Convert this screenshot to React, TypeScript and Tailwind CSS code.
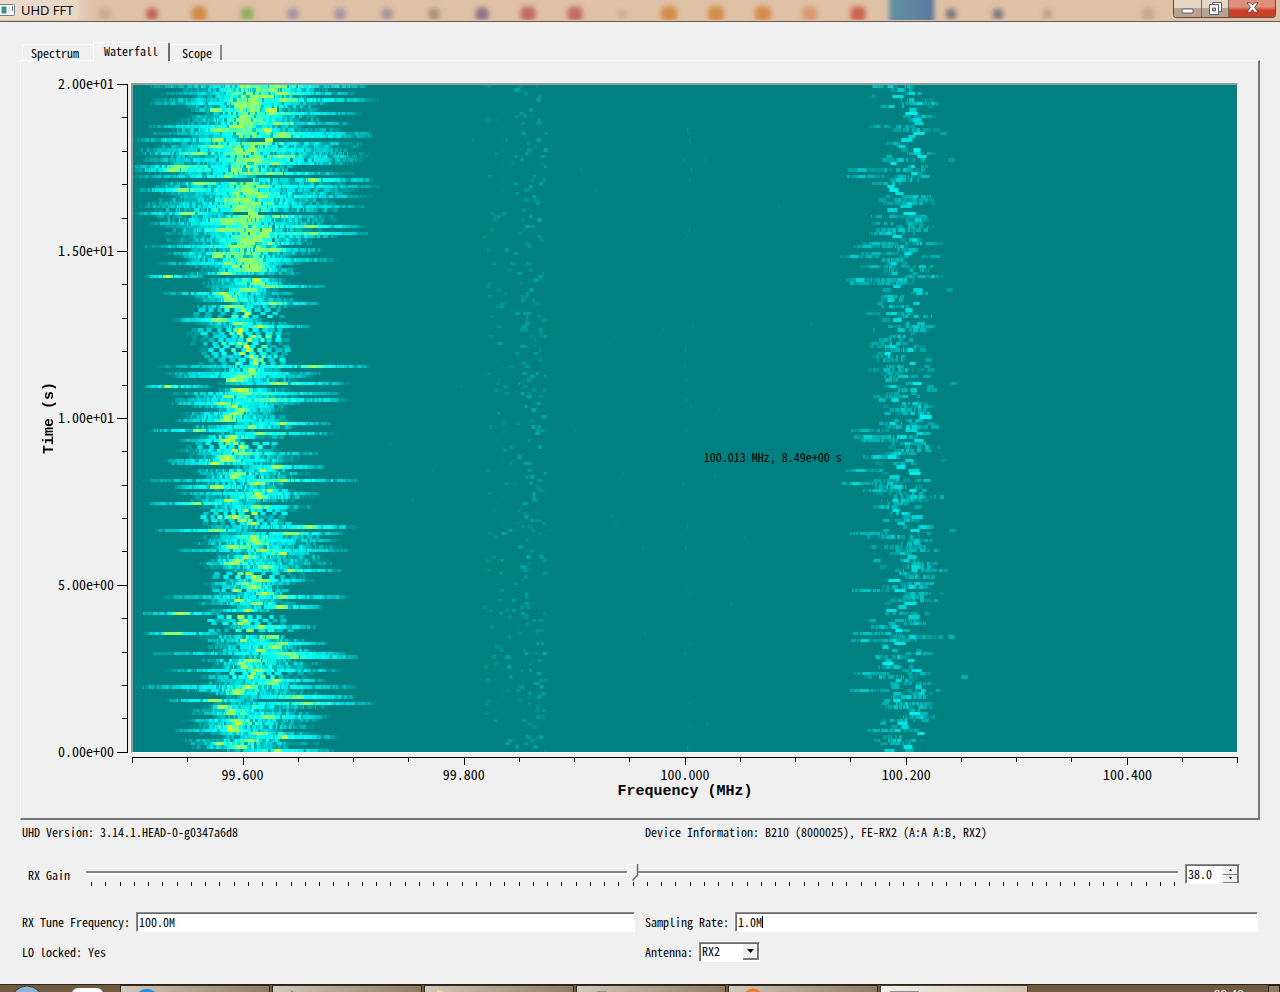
import { useMemo, useState } from 'react';
import type { ReactNode } from 'react';

const PLOT_W = 1106;
const PLOT_H = 667;
const ROWS = 200;

/** [row, left, right, left core, right core]: usual extent of the strong carrier */
const ENVELOPE: number[][] = [
  [0, 40, 185, 75, 140],
  [8, 52, 190, 75, 150],
  [14, 24, 215, 60, 150],
  [20, 12, 222, 60, 150],
  [30, 20, 212, 60, 160],
  [36, 14, 212, 65, 155],
  [44, 34, 200, 80, 150],
  [50, 40, 175, 80, 140],
  [54, 60, 160, 85, 130],
  [60, 65, 150, 88, 125],
  [66, 66, 152, 95, 125],
  [70, 52, 155, 85, 125],
  [76, 58, 155, 100, 125],
  [83, 66, 155, 98, 122],
  [88, 84, 170, 98, 150],
  [96, 58, 150, 82, 130],
  [104, 56, 150, 84, 130],
  [110, 54, 150, 80, 130],
  [118, 60, 165, 90, 140],
  [126, 70, 165, 95, 140],
  [130, 70, 150, 95, 125],
  [136, 66, 195, 100, 160],
  [142, 78, 190, 98, 150],
  [150, 72, 160, 95, 140],
  [158, 80, 150, 95, 130],
  [165, 66, 165, 90, 140],
  [172, 80, 180, 98, 150],
  [180, 62, 180, 90, 140],
  [190, 56, 175, 88, 135],
  [199, 50, 170, 80, 140],
];

/** [row, left, right, peak]: long modulation sweeps */
const STREAKS: number[][] = [
  [0, 15, 235, 145], [2, 30, 222, 150], [4, 18, 245, 150], [5, 16, 195, 105],
  [8, 70, 228, 140], [12, 14, 170, 100], [14, 18, 238, 150], [15, 50, 242, 150],
  [16, 0, 115, 85], [19, 5, 218, 120], [22, 10, 230, 120], [24, 0, 160, 45],
  [25, 0, 155, 40], [27, 0, 125, 95], [28, 120, 240, 180], [30, 20, 245, 130],
  [31, 3, 225, 50], [33, 35, 238, 130], [36, 5, 232, 108], [38, 0, 100, 54],
  [41, 15, 190, 95], [42, 25, 231, 178], [44, 30, 235, 180], [48, 10, 150, 105],
  [52, 50, 202, 110], [53, 24, 170, 95], [57, 11, 70, 35], [60, 70, 192, 135],
  [62, 29, 160, 90], [65, 90, 188, 140], [70, 38, 130, 86], [72, 70, 178, 128],
  [84, 22, 236, 181], [86, 30, 188, 120], [87, 38, 180, 110], [89, 84, 215, 145],
  [90, 10, 80, 35], [92, 36, 208, 115], [94, 40, 216, 140], [95, 35, 165, 90],
  [100, 40, 160, 95], [101, 90, 197, 150], [103, 15, 120, 65], [104, 80, 202, 128],
  [106, 45, 110, 94], [110, 55, 184, 110], [112, 30, 165, 95], [113, 35, 150, 82],
  [114, 100, 191, 143], [118, 9, 226, 150], [120, 40, 150, 84], [122, 45, 187, 125],
  [125, 14, 130, 64], [132, 68, 222, 177], [133, 21, 121, 84], [134, 84, 212, 158],
  [136, 70, 205, 122], [139, 43, 215, 130], [145, 90, 207, 158], [148, 90, 182, 128],
  [153, 29, 215, 150], [156, 95, 190, 148], [158, 6, 88, 48], [162, 90, 183, 128],
  [164, 10, 88, 40], [167, 80, 195, 150], [170, 18, 212, 155], [171, 95, 225, 161],
  [175, 30, 210, 125], [178, 75, 192, 143], [180, 3, 223, 115], [183, 90, 223, 165],
  [184, 33, 125, 82], [185, 75, 240, 174], [189, 80, 197, 135], [193, 41, 150, 100],
  [195, 85, 203, 152], [199, 90, 200, 145],
];

const SPARSE: number[][] = [[67, 69], [73, 83], [107, 108], [127, 131], [146, 147], [151, 151], [159, 161], [163, 163], [176, 177]];

function seeded(seed: number) {
  let s = seed;
  return () => {
    s = (s + 0x6d2b79f5) | 0;
    let t = Math.imul(s ^ (s >>> 15), 1 | s);
    t = (t + Math.imul(t ^ (t >>> 7), 61 | t)) ^ t;
    return ((t ^ (t >>> 14)) >>> 0) / 4294967296;
  };
}

const LEVELS = 24;

function levelColor(level: number) {
  const v = level / LEVELS;
  const mix = (a: number[], b: number[], k: number) =>
    `rgb(${a.map((n, i) => Math.round(n + (b[i] - n) * k)).join(',')})`;
  if (v < 0.55) return mix([0, 128, 128], [0, 240, 240], v / 0.55);
  if (v < 0.65) return mix([0, 240, 240], [10, 255, 245], (v - 0.55) / 0.1);
  if (v < 0.85) return mix([10, 255, 245], [128, 255, 128], (v - 0.65) / 0.2);
  return mix([128, 255, 128], [240, 255, 15], (v - 0.85) / 0.15);
}

function envelopeAt(row: number) {
  for (let i = 1; i < ENVELOPE.length; i++) {
    const a = ENVELOPE[i - 1];
    const b = ENVELOPE[i];
    if (row <= b[0]) {
      const k = (row - a[0]) / (b[0] - a[0]);
      return a.slice(1).map((n, j) => n + (b[j + 1] - n) * k);
    }
  }
  return ENVELOPE[ENVELOPE.length - 1].slice(1);
}

function buildWaterfall() {
  const rnd = seeded(20191);
  const paths: string[] = Array.from({ length: LEVELS + 1 }, () => '');
  for (let r = 0; r < ROWS; r++) {
    const cells = new Float32Array(PLOT_W);
    const put = (x: number, w: number, v: number) => {
      for (let i = Math.max(0, Math.round(x)); i < Math.min(PLOT_W, Math.round(x + w)); i++) {
        cells[i] = Math.max(cells[i], v);
      }
    };
    const blob = (x: number, w: number, v: number) => {
      put(x - w / 2 - 1, w + 2, v * 0.6);
      put(x - w / 2, w, v);
    };
    const streak = STREAKS.find((s) => s[0] === r);
    const sparse = SPARSE.some((s) => r >= s[0] && r <= s[1]);
    const [eL, eR, cL, cR] = envelopeAt(r);
    const dense = r < 56;

    if (sparse) {
      const step = 7 + rnd() * 4;
      const centre = 112 + (rnd() - 0.5) * 22;
      for (let x = eL + rnd() * 14; x < eR; x += step * (0.8 + rnd() * 0.6)) {
        const d = Math.abs(x - centre) / 50;
        blob(x, 3 + Math.round(rnd() * 3), Math.min(0.8, Math.max(0.12, 0.78 - d * 0.6 + (rnd() - 0.5) * 0.4)));
      }
      blob(centre, 5, 0.92 + rnd() * 0.06);
    } else {
      let left = eL + (rnd() - 0.5) * 26;
      let right = eR + (rnd() - 0.5) * 30;
      let peak = cL + rnd() * (cR - cL);
      let strength = dense ? 0.74 : 0.72;
      if (streak) {
        left = streak[1];
        right = streak[2];
        peak = streak[3];
        strength = 0.74;
      }
      const ragged = streak ? 0.18 : 0.38;
      let x = Math.max(0, left);
      while (x < right) {
        const w = 1 + Math.floor(rnd() * 3);
        const side = x < peak ? (x - left) / (peak - left + 1) : (right - x) / (right - peak + 1);
        const amp = Math.pow(Math.max(0, side), streak ? 0.5 : 0.72);
        let v = strength * amp + (rnd() - 0.5) * ragged;
        if (dense && (!streak || (x > 80 && streak[2] > 140))) {
          const core = Math.exp(-Math.pow((x - 113) / 36, 2));
          v = Math.max(v, 0.86 * core + (rnd() - 0.6) * 0.26);
        }
        if (rnd() < (1 - amp) * 0.45) v *= 0.4;
        if (rnd() < 0.07) v *= 0.5;
        put(x, w, Math.max(0.05, Math.min(0.86, v)));
        x += w;
      }
      const pw = 6 + rnd() * 12;
      put(peak - pw / 2, pw, 0.8 + rnd() * 0.07);
      put(peak - 3, 5, 0.86 + rnd() * (dense ? 0.04 : 0.1));
      if (dense && rnd() < 0.4) put(98 + rnd() * 35, 4 + rnd() * 8, 0.87 + rnd() * 0.03);
    }

    // Weak station near 99.855 MHz
    for (let k = 0; k < 3; k++) {
      if (rnd() < 0.45) {
        const c = rnd() < 0.55 ? 402 + (rnd() - 0.5) * 24 : 388 + (rnd() - 0.5) * 44;
        blob(c, 1 + Math.round(rnd() * 3), 0.07 + rnd() * 0.12);
      }
    }
    if (rnd() < 0.3) put(370, 1, 0.06);
    if (rnd() < 0.14) put(350 + rnd() * 14, 4, 0.1);
    if (rnd() < 0.16) put(556 + (rnd() - 0.5) * 10, 1, 0.07);
    if (rnd() < 0.16) put(250 + rnd() * 440, 2, 0.05);

    // Second station at 100.2 MHz
    const focus = 773 + Math.sin(r / 7) * 4 + (rnd() - 0.5) * 34;
    const mode = rnd();
    if (mode < 0.3) {
      blob(focus, 5 + rnd() * 6, 0.4 + rnd() * 0.14);
    } else {
      const span = 16 + rnd() * 40;
      for (let x = focus - span / 2; x < focus + span / 2; ) {
        const w = 1 + Math.floor(rnd() * 4);
        const edge = 1 - Math.abs(x - focus) / span;
        if (rnd() < 0.72) put(x, w, (0.08 + rnd() * 0.32) * edge + 0.05);
        x += w + (rnd() < 0.4 ? 1 : 0);
      }
      if (rnd() < 0.4) blob(focus + (rnd() - 0.5) * 12, 5, 0.36 + rnd() * 0.12);
    }
    if (rnd() < 0.5) blob(770 + (rnd() - 0.5) * 60, 3 + rnd() * 4, 0.1 + rnd() * 0.22);
    const wide = (r < 36 && rnd() < 0.2) || (r > 44 && r < 62 && rnd() < 0.35) || (r > 100 && r < 185 && rnd() < 0.18);
    if (wide) {
      const start = 708 + rnd() * 26;
      for (let x = start; x < start + 36; x += 3 + Math.floor(rnd() * 2)) put(x, 2 + rnd() * 2, 0.1 + rnd() * 0.2);
      blob(start + 14, 8, 0.24 + rnd() * 0.18);
    }
    if (rnd() < 0.05) blob(808 + rnd() * 30, 5, 0.12 + rnd() * 0.14);

    const y0 = Math.round((r * PLOT_H) / ROWS);
    const h = Math.round(((r + 1) * PLOT_H) / ROWS) - y0;
    let i = 0;
    while (i < PLOT_W) {
      const level = Math.round(Math.min(1, cells[i]) * LEVELS);
      let j = i + 1;
      while (j < PLOT_W && Math.round(Math.min(1, cells[j]) * LEVELS) === level) j++;
      if (level > 0) paths[level] += `M${i} ${y0}h${j - i}v${h}h${i - j}z`;
      i = j;
    }
  }
  return paths;
}

function Waterfall() {
  const paths = useMemo(buildWaterfall, []);
  return (
    <svg
      viewBox={`0 0 ${PLOT_W} ${PLOT_H}`}
      preserveAspectRatio="none"
      shapeRendering="crispEdges"
      className="block size-full"
      role="img"
      aria-label="Waterfall"
    >
      {paths.map((d, i) => (d ? <path key={i} d={d} fill={levelColor(i)} /> : null))}
    </svg>
  );
}

/** [centre x, colour, width] of the glass reflections behind the title bar */
const REFLECTIONS: [number, string, number][] = [
  [105, '#c9ab94', 12], [152, '#bd5c52', 11], [199, '#d48a45', 15], [247, '#94ae60', 13],
  [293, '#a393a0', 11], [340, '#a393a0', 11], [387, '#a393a0', 11], [434, '#a89078', 11],
  [482, '#8f7285', 13], [528, '#c26a68', 15], [575, '#c26a68', 15], [622, '#c9ab92', 8],
  [669, '#d48e4c', 16], [716, '#d48e4c', 16], [763, '#d48e4c', 16], [810, '#d99a72', 15],
  [858, '#cc6450', 15], [951, '#77757c', 10], [998, '#77757c', 10], [1047, '#bd9f8c', 9],
  [1148, '#c8aa92', 13],
];

function TitleBar() {
  return (
    <header className="relative flex h-[22px] shrink-0 items-start justify-between overflow-hidden border-b border-[#6b5a52] bg-[#dfc1a6]">
      <svg className="absolute inset-0 h-5 w-full" aria-hidden="true">
        <defs>
          <filter id="soft" x="-50%" y="-50%" width="200%" height="200%">
            <feGaussianBlur stdDeviation="2.4" />
          </filter>
          <linearGradient id="tile" x1="0" x2="1">
            <stop offset="0" stopColor="#6293a0" />
            <stop offset="1" stopColor="#5a78a0" />
          </linearGradient>
          <linearGradient id="glow" x1="0" x2="1">
            <stop offset="0" stopColor="#ecdccc" />
            <stop offset="0.75" stopColor="#ead8c6" />
            <stop offset="1" stopColor="#dfc1a6" stopOpacity="0" />
          </linearGradient>
        </defs>
        <rect width="100" height="20" fill="url(#glow)" />
        <rect x="889" y="-8" width="45" height="36" fill="url(#tile)" filter="url(#soft)" />
        {REFLECTIONS.map(([x, color, w]) => (
          <rect key={x} x={x - w / 2} y={14 - w / 2} width={w} height={w} rx={w / 3} fill={color} filter="url(#soft)" />
        ))}
      </svg>
      <div className="relative flex h-5 items-center gap-1.5">
        <svg width="15" height="12" viewBox="0 0 15 12" aria-hidden="true">
          <rect x="-1" y="0.5" width="15.5" height="11" rx="1" fill="#fff" stroke="#6b7f92" />
          <rect x="1.5" y="2.5" width="5" height="7" fill="#3f8f80" />
          <rect x="8" y="2.5" width="2" height="7" fill="#dde4ea" />
          <rect x="12" y="2" width="1" height="5" fill="#5c6c88" />
        </svg>
        <h1 className="font-['Open_Sans','Noto_Sans',sans-serif] text-[13px] leading-5 text-black">UHD FFT</h1>
      </div>
      <div className="relative mr-1 flex h-[18px] overflow-hidden rounded-b-[4px] border border-t-0 border-[#5d4c44]">
        <button aria-label="Minimize" className="flex w-7 items-center justify-center border-r border-[#7a685e] bg-linear-to-b from-[#e6d6c8] from-50% to-[#b9a18f] to-50%">
          <svg width="13" height="6" viewBox="0 0 13 6" className="mt-1">
            <rect x="1" y="1" width="11" height="4" rx="1" fill="#fff" stroke="#5a5f70" />
          </svg>
        </button>
        <button aria-label="Restore" className="flex w-[27px] items-center justify-center border-r border-[#7a685e] bg-linear-to-b from-[#e6d6c8] from-50% to-[#b9a18f] to-50% pb-px">
          <svg width="13" height="13" viewBox="0 0 13 13">
            <path d="M3.5 0.5h9v9h-9z" fill="#fff" stroke="#5a5f70" />
            <path d="M0.5 2.5h9v10h-9z" fill="#fff" stroke="#5a5f70" />
            <path d="M3.5 6h3v3h-3z" fill="#c8b4a4" stroke="#5a5f70" />
          </svg>
        </button>
        <button aria-label="Close" className="flex w-[46px] items-center justify-center bg-linear-to-b from-[#dd907c] from-40% to-[#c8402a] to-60% pb-0.5">
          <svg width="13" height="11" viewBox="0 0 13 11">
            <path d="M1 .8h3.500l2 2.200 2-2.200H12L8.600 5.400 12.200 10.200H8.500l-2-2.400-2 2.400H.8L4.400 5.400z" fill="#fff" stroke="#5f3a3c" strokeWidth="0.9" />
          </svg>
        </button>
      </div>
    </header>
  );
}

const TAB_PADDING: Record<string, string> = {
  Spectrum: 'pl-2 pr-3.5',
  Waterfall: 'pl-2.5 pr-2.5',
  Scope: 'pl-3 pr-2',
};

function Tab({ name, selected, onSelect }: { name: string; selected: boolean; onSelect: () => void }) {
  return (
    <button
      role="tab"
      aria-selected={selected}
      onClick={onSelect}
      className={`relative rounded-t-[2px] border-t border-white text-center leading-4 ${TAB_PADDING[name]} ${
        selected
          ? 'z-10 -mb-px h-[19px] border-r-2 border-l border-r-[#6e6e6e] bg-[#f0f0f0] pb-0.5'
          : 'h-4 border-l last:border-r-2 last:border-l-0 last:border-r-[#8a8a8a]'
      }`}
    >
      {name}
    </button>
  );
}

const TIME_LABELS = ['2.00e+01', '1.50e+01', '1.00e+01', '5.00e+00', '0.00e+00'];
const FREQ_LABELS = ['99.600', '99.800', '100.000', '100.200', '100.400'];

function Field({ id, label, children }: { id: string; label: string; children: ReactNode }) {
  return (
    <div className="flex min-w-0 flex-1 items-center gap-1.5">
      <label htmlFor={id} className="shrink-0 whitespace-pre">{label}</label>
      {children}
    </div>
  );
}

const SUNKEN = 'border border-t-[#8a8a8a] border-l-[#8a8a8a] border-r-white border-b-white shadow-[inset_1px_1px_0_#696969]';
const AXIS_TITLE = "font-['Liberation_Mono',monospace] text-[15px] leading-4 font-bold whitespace-nowrap";

function Plot() {
  return (
    <div className="grid flex-1 grid-cols-[37px_auto_minmax(0,1fr)] grid-rows-[minmax(0,1fr)_auto] pt-[22px] pr-5">
      <div className="flex items-center justify-end">
        <span className={`rotate-180 [writing-mode:vertical-rl] ${AXIS_TITLE}`}>Time (s)</span>
      </div>
      <div className="flex pt-px pr-[3px]">
        <div className="flex w-14 flex-col justify-between text-[14px]">
          {TIME_LABELS.map((t) => (
            <div key={t} className="flex h-px items-center justify-end leading-none">
              <span className="pb-[3px]">{t}</span>
            </div>
          ))}
        </div>
        <div className="ml-1 flex w-[10px] flex-col items-end justify-between border-r border-black">
          {Array.from({ length: 21 }, (_, i) => (
            <div key={i} className={i % 5 === 0 ? 'h-px w-2.5 bg-black' : 'h-px w-[5px] bg-black'} />
          ))}
        </div>
      </div>
      <div className="relative border-t-2 border-r border-b border-l-2 border-t-[#8f9f9c] border-r-white border-b-white border-l-[#8f9f9c] bg-[#008080]">
        <div className="absolute inset-0">
          <Waterfall />
        </div>
        <div className="absolute top-[56%] left-[51.7%] -translate-y-1/2 pb-1 text-black">100.013 MHz, 8.49e+00 s</div>
      </div>
      <div className="col-start-3 pt-1 pl-px">
        <div className="flex h-[7px] items-start justify-between border-t border-black">
          {Array.from({ length: 21 }, (_, i) => (
            <div key={i} className={i % 4 === 2 ? 'h-[7px] w-px bg-black' : i === 0 || i === 20 ? 'h-[5px] w-px bg-black' : 'h-1 w-px bg-black'} />
          ))}
        </div>
        <div className="grid grid-cols-5 text-center text-[14px] leading-5">
          {FREQ_LABELS.map((f) => (
            <span key={f}>{f}</span>
          ))}
        </div>
        <div className={`mb-[18px] text-center ${AXIS_TITLE}`}>Frequency (MHz)</div>
      </div>
    </div>
  );
}

const TASKS: [number, ReactNode][] = [
  [0, <circle key="a" cx="26" cy="16" r="13" fill="#1f8fe0" />],
  [1, <path key="b" d="M17 4l8 4v6z" fill="#2f7fc0" />],
  [2, <path key="c" d="M12 4l8 2h14v8H12z" fill="#f0e08c" />],
  [3, <path key="d" d="M20 5h10v6H22z" fill="#8d9a94" />],
  [4, <circle key="e" cx="24" cy="12" r="8" fill="none" stroke="#ee7a22" strokeWidth="3" />],
];

function TaskBar() {
  return (
    <footer className="flex h-2 shrink-0 items-start justify-between overflow-hidden border-t border-[#2e2415] bg-[#6f5a42]">
      <div className="flex h-8 items-start">
        <svg width="120" height="32" viewBox="0 0 120 32" aria-hidden="true">
          <circle cx="27" cy="17" r="16" fill="#8fb2cc" stroke="#2b3c4a" />
          <rect x="72" y="3" width="31" height="20" rx="6" fill="#fff" />
        </svg>
        {TASKS.map(([id, art]) => (
          <div key={id} className="mr-0.5 h-8 w-[150px] border border-[#33291c] bg-linear-to-r from-[#d2c9bd] to-[#8c7b66]">
            <svg width="100" height="32" aria-hidden="true">{art}</svg>
          </div>
        ))}
        <div className="h-8 w-[148px] border border-[#4c3e2c] bg-linear-to-r from-[#f3efe9] to-[#cfc4b5]">
          <svg width="60" height="32" aria-hidden="true">
            <rect x="9" y="5" width="29" height="20" fill="#8b8f92" />
          </svg>
        </div>
      </div>
      <div className="flex h-8 items-start">
        <time className="mt-0.5 mr-6 font-['Open_Sans',sans-serif] text-xs leading-4 text-white">09:40</time>
        <div className="h-8 w-3 border border-[#2e2415] bg-[#8e7f6b]" />
      </div>
    </footer>
  );
}

export default function App() {
  const [tab, setTab] = useState('Waterfall');
  const [gain, setGain] = useState(38);
  const [freq, setFreq] = useState('100.0M');
  const [rate, setRate] = useState('1.0M');
  const [antenna, setAntenna] = useState('RX2');
  const nudge = (d: number) => setGain((g) => Math.min(76, Math.max(0, g + d)));

  return (
    <div className="flex min-h-screen flex-col bg-[#f0f0f0] font-['Noto_Sans_CJK_SC','Liberation_Mono',monospace] text-xs leading-4 text-black [font-feature-settings:'hwid']">
      <TitleBar />
      <main className="flex flex-1 flex-col px-5 pt-5">
        <div role="tablist" className="flex items-end pl-0.5">
          {['Spectrum', 'Waterfall', 'Scope'].map((n) => (
            <Tab key={n} name={n} selected={tab === n} onSelect={() => setTab(n)} />
          ))}
        </div>
        <section className="flex flex-1 flex-col border-t border-r-2 border-b-2 border-l border-t-white border-r-[#777777] border-b-[#777777] border-l-white">
          <Plot />
        </section>

        <div className="flex gap-2.5 px-0.5 pt-1">
          <p className="flex-1">UHD Version: 3.14.1.HEAD-0-g0347a6d8</p>
          <p className="flex-1">Device Information: B210 (8000025), FE-RX2 (A:A A:B, RX2)</p>
        </div>

        <div className="mt-6 flex items-start pr-5 pl-2">
          <label htmlFor="gain" className="mt-[3px] w-[58px]">RX Gain</label>
          <div className="flex-1">
            <div className="relative flex h-[18px] items-center">
              <input
                id="gain"
                type="range"
                min={0}
                max={76}
                value={gain}
                onChange={(e) => setGain(Number(e.target.value))}
                className="h-4 w-full appearance-none bg-transparent [&::-webkit-slider-runnable-track]:h-1 [&::-webkit-slider-runnable-track]:border-t-2 [&::-webkit-slider-runnable-track]:border-b-2 [&::-webkit-slider-runnable-track]:border-t-[#858585] [&::-webkit-slider-runnable-track]:border-b-white [&::-webkit-slider-thumb]:h-4 [&::-webkit-slider-thumb]:w-[11px] [&::-webkit-slider-thumb]:appearance-none"
              />
              <div className="pointer-events-none absolute inset-y-0 right-[3px] left-[5px]">
                <svg
                  width="12"
                  height="17"
                  viewBox="0 0 12 17"
                  className="absolute top-0 -translate-x-1/2"
                  style={{ left: `${(gain / 76) * 100}%` }}
                  aria-hidden="true"
                >
                  <path d="M0.500 0.500h10.500v10.500l-5 5-5.500-5z" fill="#f0f0f0" />
                  <path d="M0.500 11V0.500H10" fill="none" stroke="#fff" />
                  <path d="M10.500 0v11l-5 5.500" fill="none" stroke="#6a6a6a" strokeWidth="1.500" />
                </svg>
              </div>
            </div>
            <div className="flex justify-between pr-[3px] pl-[5px]">
              {Array.from({ length: 77 }, (_, i) => (
                <span key={i} className="h-1 w-px bg-black" />
              ))}
            </div>
          </div>
          <div className={`ml-[7px] flex h-5 w-[55px] bg-white ${SUNKEN}`}>
            <input
              aria-label="RX Gain value"
              value={gain.toFixed(1)}
              onChange={(e) => setGain(Math.min(76, Math.max(0, Number(e.target.value) || 0)))}
              className="w-[37px] bg-transparent pl-0.5 text-xs outline-none"
            />
            <div className="flex flex-1 flex-col pt-px">
              <button aria-label="Increase gain" onClick={() => nudge(1)} className="flex flex-1 items-center justify-center border-r-2 border-b border-[#777777] bg-[#f0f0f0]">
                <svg width="5" height="3" viewBox="0 0 5 3"><path d="M1 3h3L2.500 1z" /></svg>
              </button>
              <button aria-label="Decrease gain" onClick={() => nudge(-1)} className="flex flex-1 items-center justify-center border-r-2 border-b border-[#777777] bg-[#f0f0f0]">
                <svg width="5" height="3" viewBox="0 0 5 3"><path d="M1 0h3L2.500 2z" /></svg>
              </button>
            </div>
          </div>
        </div>

        <div className="mt-[26px] flex gap-2.5 px-0.5">
          <Field id="freq" label="RX Tune Frequency:">
            <input id="freq" value={freq} onChange={(e) => setFreq(e.target.value)} className={`h-5 min-w-0 flex-1 bg-white pb-0.5 pl-0.5 text-xs outline-none ${SUNKEN}`} />
          </Field>
          <Field id="rate" label="Sampling Rate:">
            <div className="relative flex min-w-0 flex-1">
              <input id="rate" value={rate} onChange={(e) => setRate(e.target.value)} className={`h-5 min-w-0 flex-1 bg-white pb-0.5 pl-0.5 text-xs caret-transparent outline-none ${SUNKEN}`} />
              <span className="pointer-events-none absolute top-1 h-3 w-px bg-black" style={{ left: `${rate.length * 6 + 3}px` }} />
            </div>
          </Field>
        </div>

        <div className="mt-2.5 mb-[22px] flex items-center gap-2.5 px-0.5">
          <p className="flex-1">LO locked: Yes</p>
          <Field id="antenna" label="Antenna:">
            <div className={`relative h-5 w-[61px] bg-white ${SUNKEN}`}>
              <select
                id="antenna"
                value={antenna}
                onChange={(e) => setAntenna(e.target.value)}
                className="block h-[18px] w-full appearance-none bg-transparent pb-0.5 pl-0.5 text-xs leading-4 outline-none"
              >
                <option>RX2</option>
                <option>TX/RX</option>
              </select>
              <span className="pointer-events-none absolute top-px right-0 bottom-px flex w-4 items-center justify-center border-r-2 border-b-2 border-[#777777] bg-[#f0f0f0]">
                <svg width="7" height="4" viewBox="0 0 7 4"><path d="M0 0h7L3.500 4z" /></svg>
              </span>
            </div>
          </Field>
        </div>
      </main>
      <TaskBar />
    </div>
  );
}
